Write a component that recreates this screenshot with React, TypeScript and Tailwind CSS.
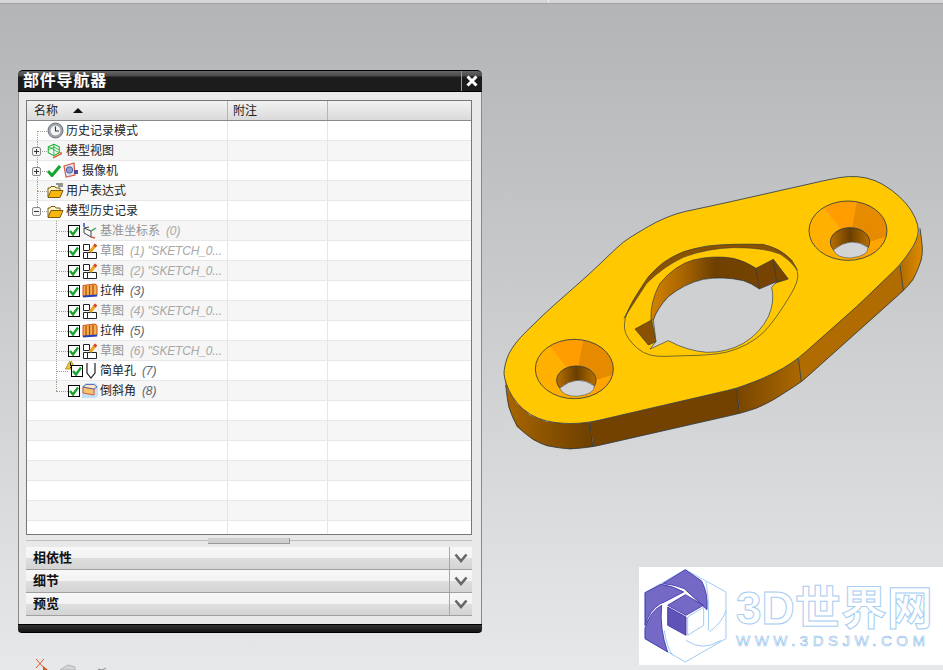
import { ReactNode } from 'react';

const stack = "[font-family:'Liberation_Sans','Noto_Sans_CJK_SC',sans-serif]";

// polyline with its corners rounded off, for the curved edges of the part
function rounded(pts: number[][], r: number, closed = true) {
  const n = pts.length;
  const towards = (a: number[], b: number[]) => {
    const len = Math.hypot(b[0] - a[0], b[1] - a[1]);
    const t = Math.min(r, len / 2) / len;
    return [a[0] + (b[0] - a[0]) * t, a[1] + (b[1] - a[1]) * t];
  };
  let d = '';
  pts.forEach((p, i) => {
    if (!closed && (i === 0 || i === n - 1)) {
      d += `${i === 0 ? 'M' : 'L'}${p[0]} ${p[1]}`;
      return;
    }
    const a = towards(p, pts[(i - 1 + n) % n]);
    const b = towards(p, pts[(i + 1) % n]);
    d += `${i === 0 ? 'M' : 'L'}${a[0]} ${a[1]}Q${p[0]} ${p[1]} ${b[0]} ${b[1]}`;
  });
  return closed ? d + 'z' : d;
}

function Clock() {
  return (
    <svg width="17" height="17" viewBox="0 0 17 17">
      <circle cx="8.500" cy="8.500" r="7.500" fill="#a4a9b1" stroke="#6a6f77" />
      <circle cx="8.500" cy="8.500" r="5.400" fill="#f4f5f7" stroke="#7d828a" strokeWidth="0.600" />
      <path d="M8.500 4.500V9H12" fill="none" stroke="#333" strokeWidth="1.100" />
    </svg>
  );
}

function ModelView() {
  return (
    <svg width="20" height="18" viewBox="0 0 20 18">
      <path d="M8 1l6.500 3v7L8 14.500 1.500 11V4z" fill="none" stroke="#19b233" strokeWidth="1.200" />
      <path d="M1.500 7.500L8 4.500l6.500 3M8 1v13.500M1.500 4L14.500 11" fill="none" stroke="#19b233" strokeWidth="1" />
      <path d="M7 17l10-5" stroke="#e8532b" strokeWidth="1.600" />
      <path d="M18 10.500l-3 .3 1.500 2.700z" fill="#e8532b" />
    </svg>
  );
}

function GreenCheck() {
  return (
    <svg width="14" height="13" viewBox="0 0 14 13">
      <path d="M1 7l4 4.500L13 2" fill="none" stroke="#16a52d" strokeWidth="3" />
    </svg>
  );
}

function Camera() {
  return (
    <svg width="17" height="17" viewBox="0 0 17 17">
      <path d="M2 4l10-3 1 12-9 2z" fill="#dfe3ef" stroke="#d9583d" strokeWidth="1.200" />
      <circle cx="7.500" cy="8" r="3.200" fill="#8ea2cf" stroke="#4a5fa0" />
      <rect x="12" y="8" width="4" height="4" fill="#5b4a86" />
    </svg>
  );
}

function Folder({ lines }: { lines?: boolean }) {
  return (
    <svg width="17" height="16" viewBox="0 0 17 16">
      <path d="M1 14V5h2l1-1.500h4L9 5h4v2" fill="#fff3c4" stroke="#7a5a10" />
      <path d="M1 14.500L4 7.500h12l-3 7z" fill="#f8b70c" stroke="#7a5a10" />
      {lines && <path d="M9 1h7M11 3h5" stroke="#333" strokeWidth="1" />}
    </svg>
  );
}

function Datum() {
  return (
    <svg width="16" height="16" viewBox="0 0 16 16">
      <path d="M2 5l7 3v6l-7-4zM2 5l5-1" fill="none" stroke="#444" strokeWidth="1" />
      <path d="M9 8l5-3" stroke="#2aa84a" strokeWidth="1.400" />
      <path d="M9 14l4 1" stroke="#d9583d" strokeWidth="1.400" />
      <path d="M2 0v4" stroke="#2244cc" strokeWidth="1.400" />
    </svg>
  );
}

function Sketch() {
  return (
    <svg width="16" height="16" viewBox="0 0 16 16">
      <path d="M1.500 1.500h6v6h-6zM1.500 9.500h4v6h-4zM5.500 9.500h9v6h-9z" fill="#fff" stroke="#222" />
      <path d="M8 9l6-7.500" stroke="#f0a020" strokeWidth="3" />
      <path d="M12.500 3.500l1.500-2" stroke="#d9432b" strokeWidth="3" />
    </svg>
  );
}

function Extrude() {
  return (
    <svg width="16" height="15" viewBox="0 0 16 15">
      <path d="M1 2.500L13 1l2 1.500v10L1 13.500z" fill="#f3b050" stroke="#c9541a" />
      <path d="M4 3v10M7.500 2.500v10.500M11 2v11" stroke="#b8430f" strokeWidth="1.200" />
      <path d="M1 13.500l14-1" stroke="#2740c0" strokeWidth="2" />
    </svg>
  );
}

function HoleIcon() {
  return (
    <svg width="10" height="16" viewBox="0 0 10 16">
      <path d="M1 0v10l4 5 4-5V0" fill="#fff" stroke="#222" strokeWidth="1.200" />
    </svg>
  );
}

function Chamfer() {
  return (
    <svg width="16" height="15" viewBox="0 0 16 15">
      <path d="M0 3l4-3h9l3 3v10l-3 2H0z" fill="#bfe0f5" />
      <path d="M1 4l11 2v6L1 10z" fill="#f4c36a" stroke="#d9583d" />
      <path d="M1 4l3-2.500h8L15 4l-3 2z" fill="#fbe8c0" stroke="#3e4fb0" strokeWidth="0.800" />
    </svg>
  );
}

function CheckBox() {
  return (
    <span className="relative block h-3 w-3 border border-black bg-white">
      <svg className="absolute left-0 top-0" width="10" height="10" viewBox="0 0 10 10">
        <path d="M1 5l3 3.500L9 1.500" fill="none" stroke="#16a52d" strokeWidth="2.400" />
      </svg>
    </span>
  );
}

function Warning() {
  return (
    <svg className="absolute left-[-6px] top-[-6px]" width="11" height="11" viewBox="0 0 11 11">
      <path d="M5.500 .5l5 9.500H.5z" fill="#f6c92b" stroke="#9a7a10" strokeWidth="0.700" />
      <path d="M5.500 3.500v3.500M5.500 8v1" stroke="#222" />
    </svg>
  );
}

function Plus({ open }: { open?: boolean }) {
  return (
    <span className="absolute left-[5px] top-[6px] flex h-[9px] w-[9px] items-center justify-center rounded-[2px] border border-[#8a8a8a] bg-[#f2f2f2]">
      <span className="absolute h-px w-[5px] bg-[#333]" />
      {!open && <span className="absolute h-[5px] w-px bg-[#333]" />}
    </span>
  );
}

type Item = { label: string; tail?: string; dim?: boolean; icon: ReactNode; warn?: boolean };

const topRows: { label: string; icons: ReactNode; box?: 'plus' | 'minus'; wide?: boolean }[] = [
  { label: '历史记录模式', icons: <Clock /> },
  { label: '模型视图', icons: <ModelView />, box: 'plus' },
  { label: '摄像机', icons: <><GreenCheck /><span className="ml-[1px]"><Camera /></span></>, box: 'plus', wide: true },
  { label: '用户表达式', icons: <Folder lines /> },
  { label: '模型历史记录', icons: <Folder />, box: 'minus' },
];

const items: Item[] = [
  { label: '基准坐标系', tail: '(0)', dim: true, icon: <Datum /> },
  { label: '草图', tail: '(1) "SKETCH_0...', dim: true, icon: <Sketch /> },
  { label: '草图', tail: '(2) "SKETCH_0...', dim: true, icon: <Sketch /> },
  { label: '拉伸', tail: '(3)', icon: <Extrude /> },
  { label: '草图', tail: '(4) "SKETCH_0...', dim: true, icon: <Sketch /> },
  { label: '拉伸', tail: '(5)', icon: <Extrude /> },
  { label: '草图', tail: '(6) "SKETCH_0...', dim: true, icon: <Sketch /> },
  { label: '简单孔', tail: '(7)', icon: <HoleIcon />, warn: true },
  { label: '倒斜角', tail: '(8)', icon: <Chamfer /> },
];

function Cells({ index, children }: { index: number; children?: ReactNode }) {
  return (
    <div className={`flex h-5 border-b border-[#e8e8e8] ${index % 2 ? 'bg-[#f6f6f6]' : 'bg-white'}`}>
      <div className="relative flex w-[201px] shrink-0 items-center overflow-hidden border-r border-[#e6e6e6]">{children}</div>
      <div className="w-[100px] shrink-0 border-r border-[#e6e6e6]" />
      <div className="flex-1" />
    </div>
  );
}

function PartTree() {
  const blanks = Array.from({ length: 7 }, (_, i) => i + 14);
  return (
    <div className="h-[435px] overflow-hidden border border-[#777] bg-white text-xs text-[#222]">
      <div className="flex h-5 border-b border-[#8a8a8a] bg-gradient-to-b from-[#f2f2f2] to-[#dadada]">
        <div className="flex w-[201px] shrink-0 items-center border-r border-[#b5b5b5] pl-[7px]">
          名称
          <span className="ml-[15px] h-0 w-0 border-x-[5px] border-b-[5px] border-x-transparent border-b-[#111]" />
        </div>
        <div className="flex w-[100px] shrink-0 items-center border-r border-[#b5b5b5] pl-[5px]">附注</div>
        <div className="flex-1" />
      </div>
      {topRows.map((r, i) => (
        <Cells key={r.label} index={i}>
          {i < 4 && <span className="absolute left-[10px] top-[10px] h-[11px] border-l border-dotted border-[#a89c90]" />}
          {i > 0 && <span className="absolute left-[10px] top-0 h-[10px] border-l border-dotted border-[#a89c90]" />}
          <span className="absolute left-[10px] top-[10px] w-[10px] border-t border-dotted border-[#a89c90]" />
          {r.box && <Plus open={r.box === 'minus'} />}
          <span className={`ml-[20px] flex shrink-0 items-center ${r.wide ? 'w-[32px]' : 'w-[17px]'}`}>{r.icons}</span>
          <span className={r.wide ? 'pl-[3px]' : 'pl-[2px]'}>{r.label}</span>
        </Cells>
      ))}
      {items.map((it, i) => (
        <Cells key={i} index={i + 5}>
          <span className={`absolute left-[29px] top-0 border-l border-dotted border-[#a89c90] ${i === 8 ? 'h-[10px]' : 'h-[21px]'}`} />
          <span className="absolute left-[29px] top-[10px] w-[12px] border-t border-dotted border-[#a89c90]" />
          <span className={`relative shrink-0 ${it.warn ? 'ml-[44px] mt-[1px]' : 'ml-[41px]'}`}>
            {it.warn && <Warning />}
            <CheckBox />
          </span>
          <span className={`flex w-[16px] shrink-0 justify-center ${it.warn ? '' : 'ml-[2px]'}`}>{it.icon}</span>
          <span className={`whitespace-nowrap ${it.warn ? 'ml-[1px]' : 'ml-[2px]'} ${it.dim ? 'text-[#949494]' : ''}`}>
            {it.label}
            <i className={`ml-[6px] tracking-[-0.15px] ${it.dim ? 'text-[#a8a8a8]' : 'text-[#5c6470]'}`}>{it.tail}</i>
          </span>
        </Cells>
      ))}
      {blanks.map((n) => (
        <Cells key={n} index={n} />
      ))}
    </div>
  );
}

function Section({ title }: { title: string }) {
  return (
    <div className="flex h-[23px] border-b border-[#a0a0a0] bg-[linear-gradient(#f7f7f7_0,#f3f3f3_50%,#dedede_52%,#d4d4d4_100%)]">
      <div className="flex flex-1 items-center pl-[7px] text-[13px] font-bold text-[#111]">{title}</div>
      <div className="flex w-[23px] items-center justify-center border-l border-[#a8a8a8]">
        <svg width="14" height="10" viewBox="0 0 14 10">
          <path d="M1.500 1.500L7 8l5.500-6.500" fill="none" stroke="#666" strokeWidth="2.600" />
        </svg>
      </div>
    </div>
  );
}

function Navigator() {
  return (
    <div className={`absolute left-[18px] top-[70px] flex h-[563px] w-[464px] flex-col ${stack}`}>
      <div className="flex h-[22px] shrink-0 rounded-t-[5px] border-y border-black bg-[linear-gradient(#666_0,#4a4a4a_25%,#1c1c1c_30%,#1c1c1c_100%)]">
        <div className="flex flex-1 items-center pl-[5px] text-base font-bold leading-4 tracking-[0.8px] text-white">部件导航器</div>
        <div className="flex w-[21px] items-center justify-center border-l border-[#999]">
          <svg width="12" height="12" viewBox="0 0 12 12">
            <path d="M1.500 1.500l9 9M10.500 1.500l-9 9" stroke="#fff" strokeWidth="3" />
          </svg>
        </div>
      </div>
      <div className="flex flex-1 flex-col border-x border-[#8a8a8a] bg-[#e9e9e9] pl-[7px] pr-[9px] pt-2">
        <PartTree />
        <div className="relative mb-[4px] mt-[2px] h-[6px]">
          <div className="absolute inset-x-0 top-[3px] h-px bg-[#bdbdbd]" />
          <div className="absolute left-[182px] top-px h-[6px] w-[82px] border-b border-r border-[#999] bg-[#cfcfcf]" />
        </div>
        <Section title="相依性" />
        <Section title="细节" />
        <Section title="预览" />
      </div>
      <div className="h-[9px] shrink-0 rounded-b-[4px] border-y border-black bg-gradient-to-b from-[#333] to-[#151515]" />
    </div>
  );
}

function Countersink({ cx, cy, id }: { cx: number; cy: number; id: string }) {
  return (
    <g>
      <clipPath id={id}>
        <ellipse cx={cx} cy={cy} rx="117" ry="89" />
      </clipPath>
      <g clipPath={`url(#${id})`}>
        <rect x={cx - 120} y={cy - 95} width="240" height="190" fill="#ffb000" />
        <path d={`M${cx + 5} ${cy + 30}L${cx - 85} ${cy - 85}L${cx + 28} ${cy - 95}z`} fill="#ff9c00" />
        <path d={`M${cx + 5} ${cy + 30}L${cx + 28} ${cy - 95}L${cx + 125} ${cy - 60}L${cx + 125} ${cy + 35}L${cx + 60} ${cy + 50}z`} fill="#e68a00" />
        <path d={`M${cx + 40} ${cy + 40}L${cx + 125} ${cy + 15}L${cx + 125} ${cy + 95}L${cx + 20} ${cy + 95}z`} fill="#ffa400" />
      </g>
      <ellipse cx={cx} cy={cy} rx="117" ry="89" fill="none" stroke="#2f3a46" strokeWidth="2.500" />
      <ellipse cx={cx + 6} cy={cy + 34} rx="59" ry="43" fill="url(#holeWall)" stroke="#2f3a46" strokeWidth="2.500" />
      <path d={`M${cx - 44} ${cy + 58}Q${cx + 8} ${cy + 14} ${cx + 60} ${cy + 50}Q${cx + 62} ${cy + 76} ${cx + 8} ${cy + 82}Q${cx - 34} ${cy + 82} ${cx - 44} ${cy + 58}z`} fill="#d3d4d6" stroke="#2f3a46" strokeWidth="1.500" />
    </g>
  );
}

const topFace = [[42, 600], [50, 565], [65, 535], [90, 503], [170, 425], [300, 310], [400, 215], [440, 190], [500, 155], [560, 130], [700, 100], [1020, 28], [1075, 18], [1130, 22], [1180, 42], [1230, 80], [1265, 120], [1285, 165], [1285, 195], [1270, 230], [1230, 285], [1100, 410], [925, 565], [880, 595], [820, 625], [740, 655], [300, 757], [240, 762], [170, 755], [120, 735], [80, 700], [55, 660], [42, 620]];
const lowerEdge = [[47, 645], [55, 710], [80, 770], [130, 810], [170, 828], [240, 838], [310, 830], [750, 730], [800, 715], [850, 690], [935, 635], [1240, 362], [1270, 330], [1295, 270], [1298, 235], [1290, 175]];
const outerCut = [[72, 280], [80, 250], [100, 210], [145, 140], [190, 95], [250, 65], [320, 47], [400, 43], [490, 43], [540, 60], [575, 90], [595, 125], [592, 155], [575, 190], [530, 260], [490, 310], [440, 345], [380, 368], [320, 375], [170, 380], [130, 370], [95, 340], [75, 310]];
const hole = 'M160 270Q172 235 205 200Q255 160 310 148Q370 138 430 152Q455 160 478 177L530 155L515 172Q525 215 505 260Q480 310 430 340Q380 368 320 367Q260 362 205 332L150 357L168 335z';
const wall = 'M153 270Q150 215 180 160Q225 105 280 90Q340 75 400 85Q440 95 468 115L520 88L565 147L530 158L478 177Q455 160 430 152Q370 138 310 148Q255 160 205 200Q172 235 160 270z';

function Part() {
  const ink = '#2f3a46';
  return (
    <svg className="absolute left-[490px] top-[170px]" width="453" height="290" viewBox="0 0 1359 870">
      <defs>
        <linearGradient id="sideLeft" gradientUnits="userSpaceOnUse" x1="50" x2="300" y1="0" y2="0">
          <stop offset="0" stopColor="#a96600" />
          <stop offset="0.5" stopColor="#8a5200" />
          <stop offset="1" stopColor="#6f4000" />
        </linearGradient>
        <linearGradient id="sideMid" gradientUnits="userSpaceOnUse" x1="740" x2="930" y1="0" y2="0">
          <stop offset="0" stopColor="#784500" />
          <stop offset="1" stopColor="#aa6800" />
        </linearGradient>
        <linearGradient id="sideRight" gradientUnits="userSpaceOnUse" x1="1230" x2="1298" y1="0" y2="0">
          <stop offset="0" stopColor="#b06c00" />
          <stop offset="1" stopColor="#e08c00" />
        </linearGradient>
        <linearGradient id="holeWall" x1="0" x2="1" y1="0" y2="0">
          <stop offset="0" stopColor="#b87000" />
          <stop offset="0.5" stopColor="#6a3e00" />
          <stop offset="1" stopColor="#b87000" />
        </linearGradient>
        <linearGradient id="wall" gradientUnits="userSpaceOnUse" x1="153" x2="470" y1="0" y2="0">
          <stop offset="0" stopColor="#d58300" />
          <stop offset="0.3" stopColor="#a96500" />
          <stop offset="0.6" stopColor="#6e4000" />
          <stop offset="1" stopColor="#764400" />
        </linearGradient>
      </defs>
      {/* side walls */}
      <path d="M42 600L47 645L55 710L80 770L130 810L170 828L240 838L310 830L300 757L240 762L170 755L120 735L80 700L55 660z" fill="url(#sideLeft)" />
      <path d="M300 757L310 830L750 730L740 655z" fill="#734200" />
      <path d="M740 655L750 730L800 715L850 690L935 635L925 565L880 595L820 625z" fill="url(#sideMid)" />
      <path d="M925 565L935 635L1240 362L1230 285z" fill="#b06c00" />
      <path d="M1230 285L1240 362L1270 330L1295 270L1298 235L1290 175L1285 195L1270 230z" fill="url(#sideRight)" />
      <path d={rounded(lowerEdge, 25, false)} fill="none" stroke={ink} strokeWidth="2.500" />
      <path d="M300 757L308 830M740 655L748 730M925 565L934 635M1230 285L1240 362" stroke={ink} strokeWidth="2.500" />
      {/* top face */}
      <path d={rounded(topFace, 28)} fill="#ffc800" stroke={ink} strokeWidth="2.500" />
      <Countersink cx={253} cy={597} id="csLeft" />
      <Countersink cx={1074} cy={182} id="csRight" />
      {/* center cut */}
      <g transform="translate(330 180)" strokeLinejoin="round">
        <path d={rounded(outerCut, 25)} fill="#ffc800" stroke={ink} strokeWidth="2" />
        <path d="M72 265L100 210L145 140Q190 90 250 65Q320 45 400 43L490 43Q540 55 575 90L592 120Q570 90 540 72Q490 52 400 53Q320 55 250 82Q190 110 140 160z" fill="#8a5200" stroke={ink} strokeWidth="1.500" />
        <path d={wall} fill="url(#wall)" stroke={ink} strokeWidth="2" />
        <path d="M520 88L530 155M468 115L478 177" stroke={ink} strokeWidth="2" />
        <path d="M105 297L155 270L168 335L145 345z" fill="#8a5200" stroke={ink} strokeWidth="2" />
        <path d={hole} fill="#cfd0d2" stroke={ink} strokeWidth="2" />
      </g>
    </svg>
  );
}

function Logo() {
  return (
    <div className={`absolute left-[639px] top-[567px] flex h-[98px] w-[304px] items-center bg-white pl-[5px] ${stack}`}>
      <svg width="83" height="94" viewBox="40 26 247 282" className="shrink-0">
        <path d="M163 28L285 95V235L163 305L42 235V97z" fill="#fff" stroke="#8cc0f0" strokeWidth="2.500" />
        <path d="M95 70L163 28L212 62Q232 100 228 148L160 85Q130 72 95 70z" fill="#7469c4" stroke="#3a2fa8" strokeWidth="2.500" />
        <path d="M42 97L90 72Q130 78 158 95L100 125L88 130Q55 150 42 195z" fill="#7469c4" stroke="#3a2fa8" strokeWidth="2.500" />
        <path d="M42 235L110 275Q85 205 92 135Q55 155 42 205z" fill="#7469c4" stroke="#3a2fa8" strokeWidth="2.500" />
        <path d="M163 103L217 135L165 165L110 135z" fill="#7469c4" stroke="#3a2fa8" strokeWidth="2.500" />
        <path d="M110 140L165 170V225L110 195z" fill="#5f53b8" stroke="#3a2fa8" strokeWidth="2.500" />
        <path d="M170 170L218 140V195L170 225z" fill="#fff" stroke="#8cc0f0" strokeWidth="2.500" />
        <path d="M100 210Q105 255 125 285M165 240Q215 275 270 240M235 215Q275 185 285 150M225 65Q235 110 232 210" fill="none" stroke="#8cc0f0" strokeWidth="2.500" />
      </svg>
      <div className="ml-[9px] flex flex-col">
        <div className="h-[46px] whitespace-nowrap text-[46px] font-bold leading-[46px] text-transparent [-webkit-text-stroke:1px_#a5cdf2]">
          3D世界网
        </div>
        <div className="mt-[3px] whitespace-nowrap text-[15px] leading-[14px] tracking-[4.500px] text-transparent [-webkit-text-stroke:0.6px_#8dbdec]">
          WWW.3DSJW.COM
        </div>
      </div>
    </div>
  );
}

function BottomTriad() {
  return (
    <svg className="absolute left-[30px] top-[655px]" width="85" height="15" viewBox="0 0 85 15">
      <path d="M6 4l8 9M14 4l-8 9" stroke="#e4572e" strokeWidth="1" />
      <path d="M13 11l5 4h-5z" fill="#d9561f" />
      <path d="M30 15l8-5 7 2v3z" fill="#d4d5d7" stroke="#b4b5b7" />
      <path d="M68 14l4 1M76 13l-4 2" stroke="#8c8c8c" />
    </svg>
  );
}

export default function App() {
  return (
    <div className="relative h-[670px] w-[943px] overflow-hidden bg-gradient-to-b from-[#b3b4b6] to-[#e7e8e9]">
      <div className="flex h-1 border-b border-[#a2a2a4] bg-[#d6d6d8]">
        <div className="w-[549px] border-r border-[#f0f0f0]" />
      </div>
      <Part />
      <Navigator />
      <Logo />
      <BottomTriad />
    </div>
  );
}
